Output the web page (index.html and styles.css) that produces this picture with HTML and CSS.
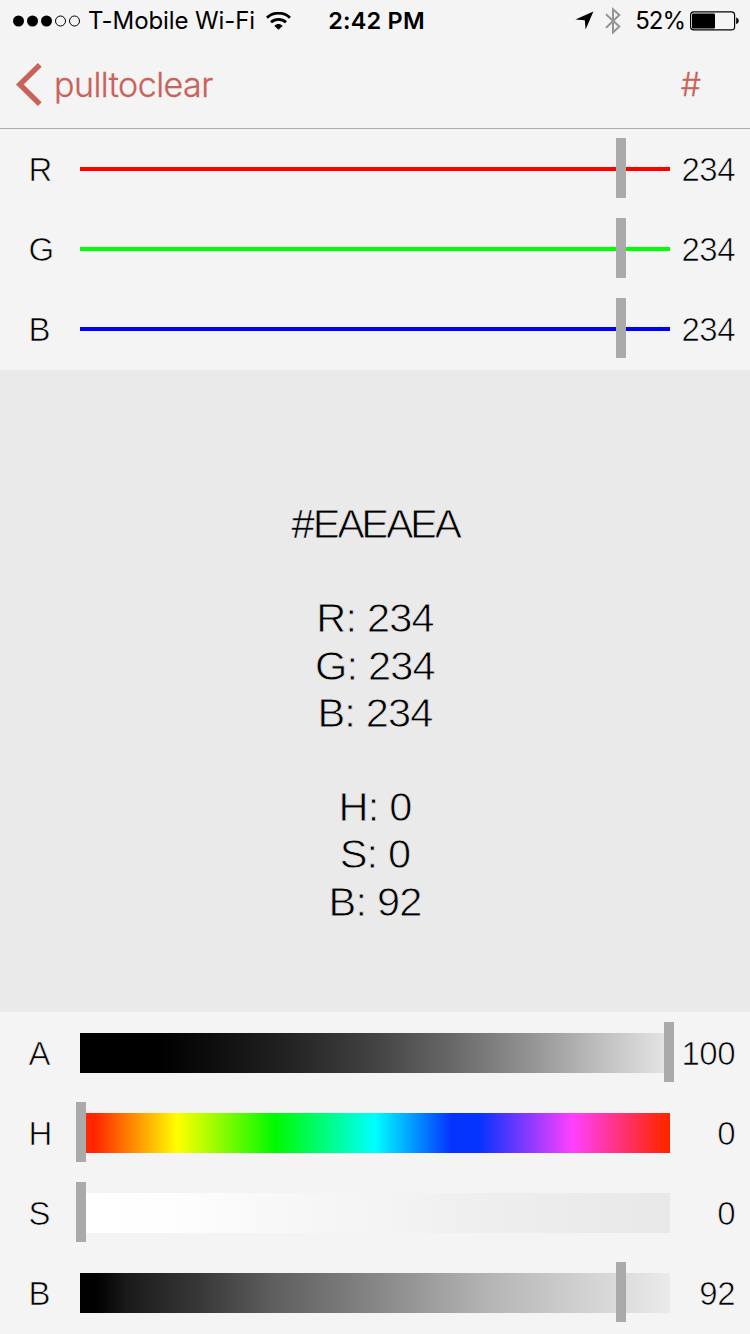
FILE: index.html
```html
<!DOCTYPE html>
<html lang="en">
<head>
<meta charset="utf-8">
<title>Color picker</title>
<link rel="stylesheet" href="styles.css">
</head>
<body>
<div class="screen">
  <header class="header">
    <div class="status">
      <div class="status-left">
        <svg class="signal" width="69" height="12" viewBox="0 0 69 12"><circle cx="6.5" cy="6" r="5.5"/><circle cx="20.5" cy="6" r="5.5"/><circle cx="34.5" cy="6" r="5.5"/><g fill="none" stroke="#000" stroke-width="1"><circle cx="48.5" cy="6" r="5"/><circle cx="62.5" cy="6" r="5"/></g></svg>
        <span class="carrier">T-Mobile Wi-Fi</span>
        <svg class="wifi" width="25" height="18" viewBox="0 0 25 18"><g fill="none" stroke="#000" stroke-width="2.8"><path d="M1 5.7C7.4-.3 17.6-.3 24 5.7"/><path d="M5 10.2C9.3 6.3 15.7 6.3 20 10.2"/></g><path d="M8.4 14C10.8 11.4 14.2 11.4 16.6 14L12.5 17.8z"/></svg>
      </div>
      <div class="clock">2:42 PM</div>
      <div class="status-right">
        <svg class="location" width="19" height="19" viewBox="0 0 19 19"><path d="M18.4.4L10.6 18.4 9.8 9.2.4 8.4z"/></svg>
        <svg class="bluetooth" width="16" height="28" viewBox="0 0 16 28"><path d="M1 7.3L14.3 19.6 8 25.5V2.3L14.3 8.1 1 20.7" fill="none" stroke="#949494" stroke-width="2"/></svg>
        <span class="percent">52%</span>
        <svg class="battery" width="50" height="20" viewBox="0 0 50 20"><rect x=".6" y=".9" width="44" height="18" rx="3.2" fill="none" stroke="#000" stroke-width="1.2"/><rect x="2" y="2.5" width="23" height="15" rx="1.2"/><path d="M46.2 6.6c3.4.8 3.4 5.8 0 6.6z"/></svg>
      </div>
    </div>
    <nav class="nav">
      <a class="back"><svg class="chevron" width="26" height="43" viewBox="0 0 26 43"><path d="M23.8 1.9L3.8 21.5 23.8 41.1" fill="none" stroke="#c9625a" stroke-width="5.4"/></svg><span class="back-label">pulltoclear</span></a>
      <span class="hash">#</span>
    </nav>
  </header>

  <section class="sliders">
    <div class="row"><span class="label">R</span><div class="track line red"><i class="thumb" style="left:541px"></i></div><span class="value">234</span></div>
    <div class="row"><span class="label">G</span><div class="track line green"><i class="thumb" style="left:541px"></i></div><span class="value">234</span></div>
    <div class="row"><span class="label">B</span><div class="track line blue"><i class="thumb" style="left:541px"></i></div><span class="value">234</span></div>
  </section>

  <main class="swatch">
    <p class="hex"><span class="number-sign">#</span>EAEAEA</p>
    <p class="group">R: 234<br>G: 234<br>B: 234</p>
    <p class="group">H: 0<br>S: 0<br>B: 92</p>
  </main>

  <section class="sliders lower">
    <div class="row"><span class="label">A</span><div class="track alpha"><i class="thumb" style="left:589px"></i></div><span class="value">100</span></div>
    <div class="row"><span class="label">H</span><div class="track hue"><i class="thumb" style="left:1px"></i></div><span class="value">0</span></div>
    <div class="row"><span class="label">S</span><div class="track saturation"><i class="thumb" style="left:1px"></i></div><span class="value">0</span></div>
    <div class="row"><span class="label">B</span><div class="track brightness"><i class="thumb" style="left:541px"></i></div><span class="value">92</span></div>
  </section>
</div>
</body>
</html>
```
FILE: styles.css
```css
* { box-sizing: border-box; }
body { margin: 0; background: #f4f4f4; color: #000; }
.screen {
  width: 750px; height: 1334px; overflow: hidden;
  display: flex; flex-direction: column;
  background: #f4f4f4;
  font-family: "Liberation Sans", Arial, sans-serif;
}
svg { display: block; flex: none; }

.header {
  height: 129px; flex: none;
  border-bottom: 1px solid #acacac;
  font-family: Inter, Roboto, sans-serif;
}
.status {
  height: 41px; padding: 0 10px 0 12px;
  display: grid; grid-template-columns: 1fr auto 1fr; align-items: center;
  font-size: 24px; line-height: 41px; white-space: nowrap;
}
.status-left, .status-right { display: flex; align-items: center; }
.status-right { justify-content: flex-end; }
.carrier { margin-left: 7px; letter-spacing: -0.1px; }
.wifi { margin-left: 11px; }
.clock { font-weight: 600; padding-left: 1px; font-size: 23.5px; letter-spacing: 0.2px; }
.bluetooth { margin-left: 11px; }
.percent { margin-left: 14px; letter-spacing: -1px; }
.battery { margin-left: 5px; }

.nav {
  height: 87px; padding: 0 49px 0 16px;
  display: flex; justify-content: space-between; align-items: center;
  color: #c9625a; font-size: 34px; font-weight: 350; line-height: 87px;
}
.back { display: flex; align-items: center; }
.back-label { margin-left: 12px; letter-spacing: -0.55px; -webkit-text-stroke: 0.3px #c9625a; }
.hash { font-size: 32px; font-weight: 300; -webkit-text-stroke: 0.3px #c9625a; }

.sliders { height: 241px; flex: none; }
.lower { height: 322px; padding-top: 1px; }
.row {
  height: 80px; padding: 0 15px 0 28px;
  display: grid; grid-template-columns: 52px 590px 1fr; align-items: center;
  font-size: 33px; line-height: 78px;
}
/* Outlining in the background colour thins the strokes to a light weight. */
.label, .value { padding-top: 2px; -webkit-text-stroke: 0.7px #f4f4f4; }
.label { padding-left: 0.5px; }
.value { text-align: right; letter-spacing: -0.5px; }
.track { position: relative; height: 40px; }
.line { height: 4px; }
.red { background: #f00; }
.green { background: #0f0; }
.blue { background: #00f; }
.thumb {
  position: absolute; top: 50%;
  width: 10px; height: 60px; margin: -31px 0 0 -5px;
  background: #aaa;
}
.alpha { background: linear-gradient(90deg, #000, #000 13%, #0e0e0e 23%, #242424 36%, #434343 50%, #686868 63%, #929292 76%, #bebebe 88%, #e6e6e6); }
.hue { background: linear-gradient(90deg, #ff2600 2.5%, #ffff00 16.5%, #00f900 33%, #00ffff 50%, #0432ff 63%, #0432ff 67.5%, #ff40ff 83.5%, #ff2600 99%); }
.saturation { background: linear-gradient(90deg, #fff, #fefefe 15%, #f9f9f9 30%, #f4f4f4 50%, #eee 70%, #e8e8e8); }
.brightness { background: linear-gradient(90deg, #000, #020202 3%, #1a1a1a 8%, #373737 20%, #5f5f5f 33%, #868686 50%, #b4b4b4 69%, #d2d2d2 86%, #eaeaea); }

.swatch {
  height: 642px; flex: none; padding-top: 130px;
  background: #eaeaea; text-align: center;
  font-size: 41.5px; line-height: 47.2px;
}
.hex, .group { margin: 0 0 47.2px; -webkit-text-stroke: 0.8px #eaeaea; }
.group { letter-spacing: -0.8px; }
.hex { letter-spacing: -3.4px; }
.number-sign { -webkit-text-stroke-width: 0.4px; letter-spacing: -1.8px; }
```
